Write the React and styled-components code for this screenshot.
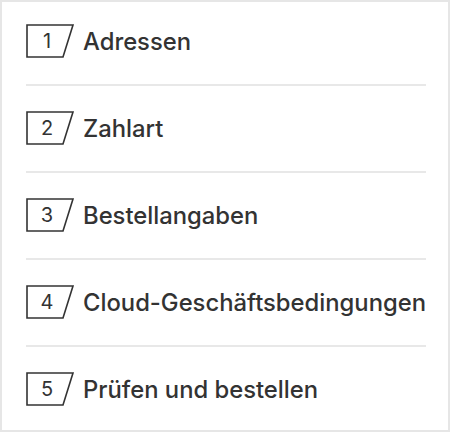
import React from "react";
import styled, { createGlobalStyle } from "styled-components";

const GlobalStyle = createGlobalStyle`
  html, body {
    margin: 0;
    padding: 0;
    background: #fff;
  }
  body {
    font-family: Inter, "Open Sans", "Liberation Sans", sans-serif;
    color: #333;
  }
`;

const Panel = styled.div`
  box-sizing: border-box;
  width: 450px;
  height: 432px;
  border: 2px solid #e6e6e6;
  background: #fff;
  overflow: hidden;
  padding: 0 22px 0 24px;
`;

const StepList = styled.ol`
  list-style: none;
  margin: 0;
  padding: 0;
`;

const Step = styled.li`
  display: flex;
  align-items: center;
  gap: 9px;
  height: 34px;
  padding: 25px 0 26px;
  border-top: 2px solid #e8e8e8;

  &:first-child {
    border-top: none;
    padding-top: 22px;
  }
`;

const Badge = styled.div`
  position: relative;
  flex: none;
  width: 48px;
  height: 34px;
  display: flex;
  align-items: center;
  padding-left: 13px;
  box-sizing: border-box;
  font-size: 20px;
  font-weight: 400;
  color: #333;

  svg {
    position: absolute;
    inset: 0;
  }
`;

const Num = styled.span`
  position: relative;
  width: 16px;
  text-align: center;
`;

const Label = styled.span`
  font-size: 23.8px;
  font-weight: 500;
  color: #333;
  white-space: nowrap;
`;

const steps = [
  "Adressen",
  "Zahlart",
  "Bestellangaben",
  "Cloud-Geschäftsbedingungen",
  "Prüfen und bestellen",
];

function StepBadge({ n }) {
  return (
    <Badge>
      <svg width="48" height="34" viewBox="0 0 48 34">
        <path d="M1 1 H47 L37 33 H1 Z" fill="none" stroke="#333" strokeWidth="1.6" />
      </svg>
      <Num>{n}</Num>
    </Badge>
  );
}

export default function App() {
  return (
    <>
      <GlobalStyle />
      <Panel>
        <StepList>
          {steps.map((s, i) => (
            <Step key={s}>
              <StepBadge n={i + 1} />
              <Label>{s}</Label>
            </Step>
          ))}
        </StepList>
      </Panel>
    </>
  );
}
